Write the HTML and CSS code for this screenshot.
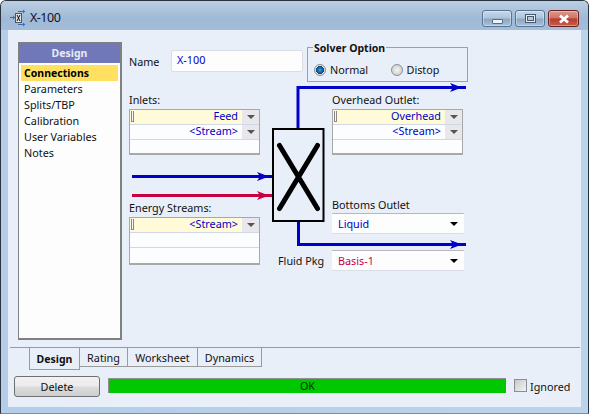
FILE: index.html
```html
<!DOCTYPE html>
<html lang="en">
<head>
<meta charset="utf-8">
<title>X-100</title>
<link rel="stylesheet" href="styles.css">
</head>
<body>
<div class="window">
  <header class="titlebar">
    <svg class="app-icon" width="20" height="20" viewBox="0 0 20 20">
      <rect x="6.500" y="5.500" width="6" height="9" fill="#e4e4e4" stroke="#555"/>
      <path d="M8 7l3 6M11 7l-3 6" stroke="#111" stroke-width="1" fill="none"/>
      <path d="M1 9.500h5M9 3.500h7M9 16.500h7" stroke="#2f6fb5" stroke-width="1"/>
      <path d="M4 7.500l2 2-2 2zM14 1.500l2 2-2 2zM14 14.500l2 2-2 2z" fill="#2f6fb5"/>
    </svg>
    <span class="title-text">X-100</span>
    <div class="controls">
      <button class="ctl ctl-min"><span class="min-glyph"></span></button>
      <button class="ctl ctl-max"><span class="max-glyph"></span></button>
      <button class="ctl ctl-close">
        <svg width="12" height="10" viewBox="0 0 12 10"><path d="M2 1.500l8 7M10 1.500l-8 7" stroke="#fff" stroke-width="2.800" fill="none"/></svg>
      </button>
    </div>
  </header>
  <div class="client">
    <div class="content">
      <nav class="nav">
        <div class="nav-head">Design</div>
        <ul class="nav-list">
          <li class="nav-item active">Connections</li>
          <li class="nav-item">Parameters</li>
          <li class="nav-item">Splits/TBP</li>
          <li class="nav-item">Calibration</li>
          <li class="nav-item">User Variables</li>
          <li class="nav-item">Notes</li>
        </ul>
      </nav>
      <main class="form">
        <svg class="pfd" width="345" height="220" viewBox="0 0 345 220">
          <g fill="none">
            <path d="M176 87V45.500H344" stroke="#0000c8" stroke-width="3"/>
            <path d="M176.500 180V202.500H344" stroke="#0000c8" stroke-width="3"/>
            <path d="M10 134.500H150" stroke="#0000c8" stroke-width="3"/>
            <path d="M10 153.500H150" stroke="#c80040" stroke-width="3"/>
          </g>
          <g class="arrow-blue">
            <path d="M328 41l12 4.500-12 4.500 3-4.500z"/>
            <path d="M328 198l12 4.500-12 4.500 3-4.500z"/>
            <path d="M135 130l12 4.500-12 4.500 3-4.500z"/>
          </g>
          <path class="arrow-red" d="M135 149l12 4.500-12 4.500 3-4.500z"/>
          <rect x="151" y="87" width="50.500" height="92" fill="#e8eff9" stroke="#000" stroke-width="2"/>
          <path d="M157.500 103.500L195.500 166.500M195.500 103.500L157.500 166.500" stroke="#000" stroke-width="5" stroke-linecap="round" fill="none"/>
        </svg>
        <div class="col-left">
          <div class="name-row">
            <label class="lbl name-lbl">Name</label>
            <div class="text-input">X-100</div>
          </div>
          <div class="field inlets">
            <div class="lbl field-lbl">Inlets:</div>
            <div class="stream-table">
              <div class="st-row first"><span class="handle"></span><span class="st-val">Feed</span><span class="st-btn"></span></div>
              <div class="st-row"><span class="st-val">&lt;Stream&gt;</span><span class="st-btn"></span></div>
              <div class="st-row empty"></div>
            </div>
          </div>
          <div class="field energy">
            <div class="lbl field-lbl">Energy Streams:</div>
            <div class="stream-table">
              <div class="st-row first"><span class="handle"></span><span class="st-val">&lt;Stream&gt;</span><span class="st-btn"></span></div>
              <div class="st-row empty"></div>
              <div class="st-row empty"></div>
            </div>
          </div>
        </div>
        <div class="col-right">
          <div class="solver">
            <div class="solver-legend">Solver Option</div>
            <span class="radio on"></span><span class="lbl radio-lbl">Normal</span>
            <span class="radio"></span><span class="lbl radio-lbl">Distop</span>
          </div>
          <div class="field overhead">
            <div class="lbl field-lbl">Overhead Outlet:</div>
            <div class="stream-table">
              <div class="st-row first"><span class="handle"></span><span class="st-val">Overhead</span><span class="st-btn"></span></div>
              <div class="st-row"><span class="st-val">&lt;Stream&gt;</span><span class="st-btn"></span></div>
              <div class="st-row empty"></div>
            </div>
          </div>
          <div class="field bottoms">
            <div class="lbl bottoms-lbl">Bottoms Outlet</div>
            <div class="select blue-text"><span>Liquid</span><span class="caret"></span></div>
          </div>
          <div class="fluid-row">
            <div class="lbl fluid-lbl">Fluid Pkg</div>
            <div class="select red-text"><span>Basis-1</span><span class="caret"></span></div>
          </div>
        </div>
      </main>
    </div>
    <div class="tabs">
      <div class="tab selected">Design</div>
      <div class="tab tab-rating">Rating</div>
      <div class="tab tab-work">Worksheet</div>
      <div class="tab tab-dyn">Dynamics</div>
    </div>
    <footer class="statusbar">
      <button class="delete">Delete</button>
      <div class="status">OK</div>
      <span class="check"></span><span class="lbl">Ignored</span>
    </footer>
  </div>
</div>
</body>
</html>
```
FILE: styles.css
```css
* { box-sizing: border-box; }
html, body { margin: 0; padding: 0; }
body { width: 589px; height: 414px; overflow: hidden; background: #fff; font: 10.8px "Noto Sans", sans-serif; color: #111; }
.window {
  width: 589px; height: 414px; display: flex; flex-direction: column;
  border: 1px solid #2a3440; border-bottom-color: #1fb4c8;
  border-radius: 6px 6px 0 0;
  background: linear-gradient(90deg, #b4cde8 0, #bcd3ec 100%);
  overflow: hidden; padding-bottom: 6px;
}
.titlebar {
  height: 29px; flex: none; display: flex; align-items: center; padding: 4px 0 0 8px;
  background: linear-gradient(180deg, #bccfe2 0, #9fb9d6 60%, #a4bdd9 100%);
}
.app-icon { margin-right: 1px; }
.title-text { font: 12.5px "Noto Sans", sans-serif; letter-spacing: -.5px; color: #10122e; }
.controls { margin-left: auto; display: flex; gap: 3px; margin-right: 9px; margin-top: 2px; }
.ctl {
  width: 30px; height: 17px; padding: 0; border: 1px solid #5a7390; border-radius: 3px;
  background: linear-gradient(180deg, #c6d7e9 0, #aec4dc 48%, #8aa6c4 52%, #a8c0da 100%);
  display: flex; align-items: center; justify-content: center;
  box-shadow: inset 0 0 0 1px rgba(255,255,255,.35);
}
.ctl-close { width: 31px; border-color: #6b2020; background: linear-gradient(180deg, #dc9a8e 0, #cf7163 48%, #b83a28 52%, #c4604e 100%); }
.min-glyph { width: 11px; height: 5px; margin-top: 5px; background: #eef2f6; border: 1px solid #5a6b80; border-radius: 1px; }
.max-glyph { width: 11px; height: 9px; background: #e8edf3; border: 1px solid #46586e; display: flex; align-items: center; justify-content: center; }
.max-glyph::after { content: ""; width: 5px; height: 3px; background: #b6c8dc; border: 1px solid #46586e; }
.client { flex: 1; margin: 0 7px; background: #e8eff9; display: flex; flex-direction: column; min-height: 0; }
.content { display: flex; height: 317px; flex: none; padding: 12px 0 0 10px; }
.nav { width: 104px; height: 298px; border: 1px solid #808080; border-right-width: 2px; border-bottom-width: 2px; background: #fdfdfd; flex: none; }
.nav-head { height: 20px; background: #7078ba; color: #e8eaf6; text-align: center; font-weight: bold; font-size: 10.5px; line-height: 21px; }
.nav-list { list-style: none; margin: 2px 2px 0 2px; padding: 0; }
.nav-item { height: 16px; line-height: 16px; padding-left: 3px; }
.nav-item.active { background: #ffe060; font-weight: bold; font-size: 10.5px; color: #000; }
.form { position: relative; display: flex; margin-left: 7px; }
.pfd { position: absolute; left: -7px; top: 0; }
.arrow-blue path { fill: #0000c8; }
.arrow-red { fill: #c80040; }
.col-left { width: 178px; flex: none; display: flex; flex-direction: column; position: relative; }
.col-right { width: 161px; flex: none; display: flex; flex-direction: column; position: relative; }
.lbl { color: #111; white-space: nowrap; }
.name-row { display: flex; align-items: center; margin-top: 8px; height: 22px; }
.name-lbl { width: 42px; }
.text-input { width: 132px; height: 22px; background: #fdfdfd; border: 1px solid #d8dde6; border-radius: 2px; color: #0000c8; padding-left: 5px; line-height: 18px; }
.field-lbl { height: 14px; line-height: 14px; margin-bottom: 2px; }
.inlets { margin-top: 21px; }
.energy { margin-top: 46px; }
.stream-table { width: 131px; height: 46px; background: #fcfdff; border: 1px solid #a8a8a8; border-bottom-width: 2px; }
.energy .stream-table { height: 48px; }
.st-row { height: 15px; display: flex; align-items: center; border-bottom: 1px solid #d0d8e8; position: relative; color: #0000c8; }
.st-row:last-child { border-bottom: 0; }
.st-row.first .st-val { background: #fffbd8; }
.st-val { flex: 1; height: 14px; text-align: right; padding-right: 4px; line-height: 12px; }
.handle { position: absolute; left: 1px; top: 1px; width: 3px; height: 11px; border: 1px solid #888; border-top: 0; background: #f6f6f6; }
.st-btn { width: 17px; height: 14px; background: #e8e8ec; position: relative; flex: none; }
.st-btn::after { content: ""; position: absolute; left: 5px; top: 5px; border: 4px solid transparent; border-top: 4px solid #555; border-bottom: 0; }
.solver { width: 161px; height: 35px; margin-top: 5px; padding: 0 0 5px 6px; border: 1px solid #a0a0a0; display: flex; align-items: flex-end; position: relative; }
.solver-legend { position: absolute; left: 5px; top: -7px; padding: 0 1px; background: #e8eff9; font-weight: bold; font-size: 10.5px; line-height: 14px; color: #111; }
.radio { width: 12px; height: 12px; border-radius: 50%; border: 1px solid #8a8f96; background: radial-gradient(circle, #f4f4f4 0, #c4c4c4 100%); flex: none; }
.radio.on { background: radial-gradient(circle, #2ea0d8 0, #1560a0 40%, #0c3f70 55%, #e6e6e6 60%); }
.radio-lbl { width: 61px; margin-left: 4px; line-height: 13px; }
.overhead { margin: 11px 0 0 25px; }
.bottoms { margin: 43px 0 0 25px; }
.bottoms-lbl { height: 14px; line-height: 14px; margin-bottom: 1px; }
.select { width: 132px; height: 20px; background: #fdfdfd; border-top: 1px solid #b8b8b8; border-radius: 1px; box-shadow: 0 1px 0 #d8dde6; display: flex; align-items: center; justify-content: space-between; padding: 0 3px 0 6px; }
.blue-text { color: #0000c8; }
.red-text { color: #c80040; }
.caret { border: 4px solid transparent; border-top: 4px solid #000; border-bottom: 0; margin-right: 3px; }
.fluid-row { display: flex; align-items: center; margin: 17px 0 0 -29px; }
.fluid-lbl { width: 54px; }
.tabs { display: flex; align-items: flex-start; border-top: 1px solid #9a9a9a; height: 29px; flex: none; padding-left: 19px; margin: 0 1px 0 2px; }
.tab { height: 19px; border: 1px solid #9a9a9a; border-top: 0; border-left: 0; line-height: 20px; text-align: center; }
.tab.selected { width: 51px; height: 22px; border-left: 1px solid #9a9a9a; font-weight: bold; font-size: 10.5px; line-height: 22px; }
.tab-rating { width: 48px; }
.tab-work { width: 70px; }
.tab-dyn { width: 64px; }
.statusbar { display: flex; align-items: center; padding-left: 6px; height: 21px; }
.delete { width: 86px; height: 21px; border: 1px solid #707070; border-radius: 3px; background: linear-gradient(180deg, #f2f2f2 0, #ebebeb 48%, #dcdcdc 52%, #cfcfcf 100%); font: 10.8px "Noto Sans", sans-serif; color: #111; padding: 0; flex: none; }
.status { width: 398px; height: 15px; margin: -2px 8px 0; background: #00c800; border-top: 1px solid #909090; border-left: 1px solid #909090; text-align: center; line-height: 14px; color: #003000; flex: none; }
.check { width: 13px; height: 13px; margin: -2px 3px 0 0; border: 1px solid #8a8f96; background: linear-gradient(135deg, #c8c8c8, #f4f4f4); flex: none; }
```
